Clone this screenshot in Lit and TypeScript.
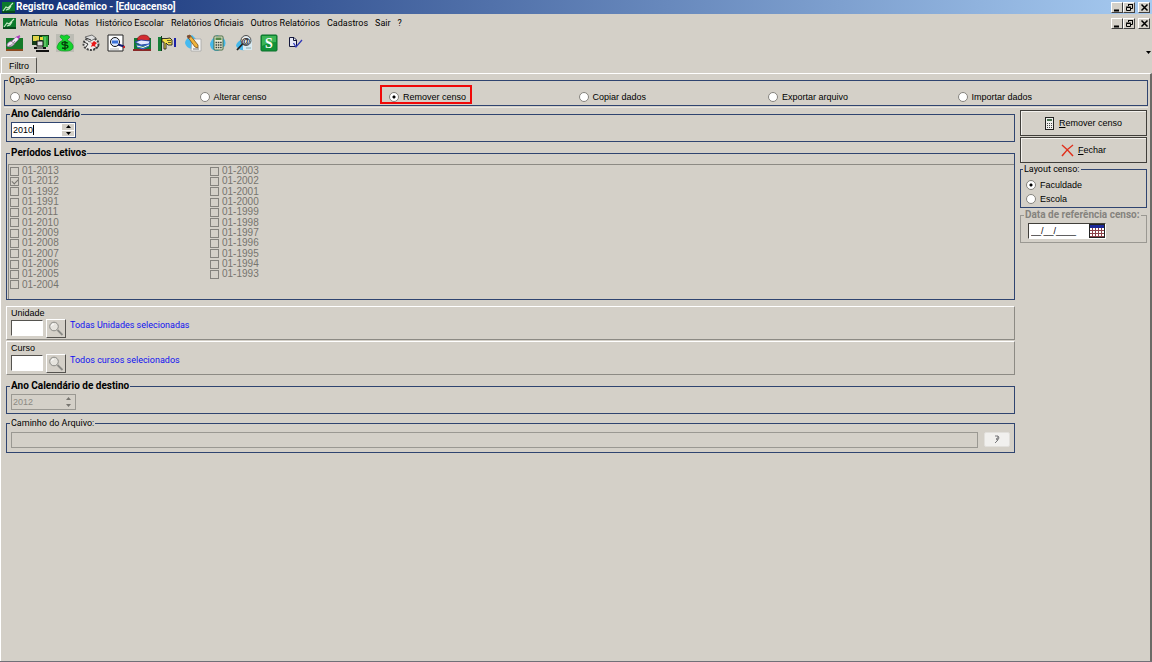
import { LitElement, html, css, svg } from "lit";
import { customElement, property, state } from "lit/decorators.js";

const leaf = svg`<rect x="0" y="0" width="13" height="11" fill="#0c7a2c"/><rect x="0" y="9" width="13" height="2" fill="#064a1c"/><path d="M1 9L4 5L6 6L11 1M4 8L7 7L9 4" stroke="#c8ecc8" stroke-width="1.1" fill="none"/>`;

const magnifier = svg`<circle cx="6" cy="5.500" r="4.300" fill="#e6e4de" stroke="#8a8a86"/><path d="M9.500 9L14.500 14" stroke="#8a8a86" stroke-width="1.800"/><path d="M3.500 5Q4 3 6 3" stroke="#fff" fill="none"/>`;

const toolIcons: { name: string; art: unknown }[] = [
  { name: "Matrícula", art: svg`<path d="M1 4H18V15H1Z" fill="#157a28"/><path d="M1 15H18V17H1Z" fill="#8a4a20"/><path d="M2 12Q2 8 7 7L11 3L15 2L13 6L10 9Q7 14 2 12Z" fill="#f3e6f5" stroke="#a06ab0" stroke-width=".7"/><path d="M4 12Q7 12 10 7M6 7L10 10" stroke="#777" stroke-width=".8" fill="none"/><path d="M11 3L15 1L14 5Z" fill="#b13ac0"/>` },
  { name: "Turmas", art: svg`<rect x="1" y="1" width="17" height="10" fill="#143c18"/><rect x="2" y="2" width="6" height="5" fill="#e0d44a"/><rect x="11" y="2" width="6" height="11" fill="#2aa43a"/><path d="M14 3V15" stroke="#8be08b"/><rect x="6" y="7" width="6" height="5" fill="#dcdcdc" stroke="#111"/><path d="M3 14H15M5 17H18" stroke="#111" stroke-width="2"/><path d="M6 14H12" stroke="#e8e8e8"/><rect x="9" y="3" width="3" height="3" fill="#e8d83a"/>` },
  { name: "Financeiro", art: svg`<rect width="18" height="18" fill="#bcbcb4"/><path d="M5 1L8 2L11 1L14 3L11 6Q18 9 17 14Q16 17 9 17Q1 17 1 13Q2 8 7 6L4 3Z" fill="#14d42c" stroke="#0a9a20" stroke-width=".7"/><path d="M12 9Q6 7 6 9.500Q6 11 9 11Q12 11 12 13Q11 15 6 14M9 7V16" stroke="#073c0d" stroke-width="1.300" fill="none"/>` },
  { name: "Transferência", art: svg`<ellipse cx="9" cy="10" rx="7.500" ry="6" fill="#ececea" stroke="#444" stroke-width="2" stroke-dasharray="2 1.200"/><path d="M3 3L10 1L14 4L7 8Z" fill="#dedede" stroke="#555" stroke-width=".8"/><path d="M2 8L6 10L4 13M12 15L17 12M4 4L9 6" stroke="#333" fill="none"/><path d="M8 8L10 9L12 7L15 9L13 11L14 13L11 12L9 13L10 10Z" fill="#e81818"/>` },
  { name: "Consultar", art: svg`<path d="M1 1H16V17H1Z" fill="#fff" stroke="#222"/><path d="M3 15H12" stroke="#b0b0b0"/><circle cx="8" cy="8" r="4.500" fill="#dfeaff" stroke="#111"/><rect x="5" y="6.500" width="6" height="3" fill="#3a70d8"/><path d="M11 10.500L17 12.500" stroke="#101c70" stroke-width="2"/><circle cx="17" cy="13" r="1.200" fill="#c02020"/>` },
  { name: "Biblioteca", art: svg`<rect x="1" y="4" width="17" height="11" fill="#147a34"/><rect x="0" y="15" width="18" height="2" fill="#8a2828"/><path d="M4 6Q5 1 11 1Q16 1 17 6L11 7Z" fill="#d42c30" stroke="#6a1616" stroke-width=".6"/><path d="M2 8L8 6L17 7L16 10L8 11Z" fill="#e4e8ff" stroke="#1c38a8" stroke-width=".8"/><path d="M3 11L10 12L17 10M4 13L10 15L16 12" stroke="#3c62e0" fill="none"/><path d="M4 12L10 13.500L16 11" stroke="#fff" fill="none"/>` },
  { name: "Encaminhar", art: svg`<rect x="0" y="3" width="3" height="14" fill="#178038"/><path d="M3.500 2V17" stroke="#0c3c18"/><path d="M4 4.500H9L12 4L14 6V11H10L8 9V15H6V8H4Z" fill="#f2e04c" stroke="#222" stroke-width=".9"/><path d="M9 6.500H13M10 8.500H13" stroke="#222" stroke-width=".7"/><rect x="16" y="4" width="2" height="9" fill="#1c22a8"/>` },
  { name: "Editar", art: svg`<path d="M8 1Q1 5 1 9Q2 14 8 15Q15 14 15 8Z" fill="#46baf0"/><path d="M8 5H17V17H7Z" fill="#f6f6f4" stroke="#a6a6a6" stroke-width=".8"/><path d="M3 2L6 1L14 11L14 14L11 13Z" fill="#f0b43c" stroke="#76501c" stroke-width=".8"/><path d="M3 2L6 1L7 3L4 5Z" fill="#7a4a38"/><path d="M9 15H15" stroke="#777"/>` },
  { name: "Calcular", art: svg`<path d="M8 1Q1 6 1 11Q2 17 9 17L16 12Q18 5 12 3Z" fill="#46b8ea"/><rect x="5" y="2" width="9" height="14" rx="1" fill="#e8e8d4" stroke="#466a42"/><rect x="6.500" y="3.500" width="6" height="2.500" fill="#568a48"/><path d="M6.500 8.500H13M6.500 11H13M6.500 13.500H13" stroke="#36433c" stroke-width="1.500" stroke-dasharray="1.600 .7"/>` },
  { name: "Pesquisar", art: svg`<path d="M9 4Q1 8 1 12Q4 17 10 16Z" fill="#46b8ea"/><path d="M8 5H17V16H8Z" fill="#d8ebf2"/><path d="M11 14H16" stroke="#8aa" /><circle cx="11" cy="6.500" r="5" fill="#e6eef2" stroke="#4a4a4a"/><text x="11" y="9.500" text-anchor="middle" font-family="Liberation Sans" font-weight="bold" font-size="9">@</text><path d="M7.500 10L2 16" stroke="#222" stroke-width="1.800"/>` },
  { name: "Situação", art: svg`<rect x="1" y="1" width="16" height="16" rx="1" fill="#139238" stroke="#08702a"/><path d="M2 2H16V8Q9 8 2 12Z" fill="#3cb456"/><text x="9" y="14" text-anchor="middle" font-family="Liberation Serif" font-weight="bold" font-size="14" fill="#fff">S</text>` },
  { name: "Confirmar", art: svg`<path d="M3.500 3.500H8L10.500 6V12.500H3.500Z" fill="#e6e8f4" stroke="#14183c"/><path d="M7.500 4V6.500H10" stroke="#14183c" fill="none"/><path d="M7.500 9L10 13L16 6" stroke="#3038b8" stroke-width="1.300" fill="none"/>` },
];

/** Classic minimise / restore / close trio. */
@customElement("window-controls")
class WindowControls extends LitElement {
  static styles = css`
    :host { display: flex; }
    button { width: 12px; height: 11px; padding: 0; display: grid; place-items: center; background: #d4d0c8; border: 1px solid; border-color: #fff #404040 #404040 #fff; }
    .close { margin-left: 3px; }
    svg { display: block; }
  `;
  render() {
    return html`
      <button aria-label="Minimizar"><svg width="9" height="9"><path d="M1 7.500H6" stroke="#000" stroke-width="2"/></svg></button>
      <button aria-label="Restaurar"><svg width="9" height="9"><path d="M3.500 3V1.500H7.500V5.500H6M3 1.500H8M1.500 4.500H5.500V7.500H1.500ZM1 4H6" stroke="#000" fill="none"/></svg></button>
      <button class="close" aria-label="Fechar janela"><svg width="9" height="9"><path d="M1.500 1.500L7.500 7.500M7.500 1.500L1.500 7.500" stroke="#000" stroke-width="1.500"/></svg></button>`;
  }
}

/** Year field with up and down arrows. */
@customElement("year-spinner")
class YearSpinner extends LitElement {
  @property() label = "";
  @property({ type: Number }) value = 2010;
  @property({ type: Boolean }) disabled = false;
  @property({ type: Boolean }) caret = false;
  static styles = css`
    :host { display: block; }
    .box { position: relative; display: flex; box-sizing: border-box; width: 65px; height: 16px; border: 1px solid #2f4470; background: #fff; }
    .box.off { border-color: #9a9892; background: #d4d0c8; }
    input { flex: 1; min-width: 0; border: 0; margin: 0; padding: 0 1px; background: none; color: #000; font: 9px "Liberation Sans", Arial, sans-serif; appearance: textfield; outline: 0; }
    input::-webkit-inner-spin-button { appearance: none; }
    .off input { color: #8c8a84; }
    .arrows { display: flex; flex-direction: column; width: 12px; padding: 1px; gap: 1px; }
    button { flex: 1; border: 0; padding: 0; display: grid; place-items: center; background: #d4d0c8; }
    svg { display: block; }
    .caret { position: absolute; left: 21px; top: 2px; width: 1px; height: 10px; background: #000; }
  `;
  private step(by: number) { this.value += by; }
  render() {
    const ink = this.disabled ? "#77756f" : "#000";
    return html`<div class="box ${this.disabled ? "off" : ""}">
      <input type="number" aria-label=${this.label} .value=${String(this.value)} ?disabled=${this.disabled}>
      ${this.caret ? html`<span class="caret"></span>` : ""}
      <div class="arrows">
        <button aria-label="Aumentar" ?disabled=${this.disabled} @click=${() => this.step(1)}><svg width="5" height="3"><path d="M0 3L2.500 0L5 3Z" fill=${ink}/></svg></button>
        <button aria-label="Diminuir" ?disabled=${this.disabled} @click=${() => this.step(-1)}><svg width="5" height="3"><path d="M0 0L2.500 3L5 0Z" fill=${ink}/></svg></button>
      </div>
    </div>`;
  }
}

@customElement("app-root")
class AppRoot extends LitElement {
  @state() private option = "Remover censo";
  @state() private layout = "Faculdade";

  private menus = ["Matrícula", "Notas", "Histórico Escolar", "Relatórios Oficiais", "Outros Relatórios", "Cadastros", "Sair", "?"];
  private options = ["Novo censo", "Alterar censo", "Remover censo", "Copiar dados", "Exportar arquivo", "Importar dados"];
  private terms = ["2013", "2012", "1992", "1991", "2011", "2010", "2009", "2008", "2007", "2006", "2005", "2004", "2003", "2002", "2001", "2000", "1999", "1998", "1997", "1996", "1995", "1994", "1993"];

  static styles = css`
    :host { display: flex; flex-direction: column; min-height: 100vh; box-sizing: border-box; background: #d4d0c8; border-bottom: 1px solid #707078; color: #000; font: 9px/12px "Liberation Sans", Arial, sans-serif; }
    * { box-sizing: border-box; }
    svg { display: block; flex: none; }
    button { font: inherit; color: inherit; padding: 0; }
    .title { display: flex; align-items: center; height: 14px; padding: 0 2px; gap: 1px; background: linear-gradient(90deg, #122f76, #a6caf0); color: #fff; }
    .title h1 { flex: 1; margin: 0; font: bold 10px/14px Roboto, Tahoma, sans-serif; }
    .menu { display: flex; align-items: center; height: 16px; margin-top: 1px; padding: 0 2px 0 3px; font-family: Roboto, Tahoma, sans-serif; }
    .menu nav { flex: 1; display: flex; gap: 7px; padding-left: 4px; }
    .menu a { color: inherit; text-decoration: none; }
    .tools { display: flex; align-items: center; justify-content: space-between; height: 26px; padding: 0 1px 2px 5px; }
    .set { width: 299px; display: flex; justify-content: space-between; }
    .tool { width: 18px; height: 18px; background: none; border: 0; }
    .more { align-self: flex-end; background: none; border: 0; }
    .tab { width: 36px; height: 16px; background: none; border: 0; border-top: 1px solid #fff; border-left: 1px solid #fff; border-right: 1px solid #55534f; margin-left: 1px; border-radius: 2px 2px 0 0; }
    .page { flex: 1; display: flex; flex-direction: column; border-top: 1px solid #fff; border-left: 1px solid #fff; border-right: 2px solid #6c6a66; padding: 0 2px 0 3px; }
    fieldset { margin: 0; min-width: 0; border: 1px solid #2f4470; padding: 0 4px; }
    legend { padding: 0 1px; margin-left: -1px; line-height: 12px; font-family: Roboto, Tahoma, sans-serif; }
    .strong > legend { font-weight: bold; font-size: 10px; }
    .choices { padding: 0; }
    .choices > legend { margin-left: 3px; }
    .options { display: grid; grid-template-columns: repeat(6, 1fr); justify-items: start; padding: 5px 0 2px 5px; }
    .radio { position: relative; display: flex; align-items: center; gap: 4px; }
    .marked::after { content: ""; position: absolute; inset: -6px -6px -1px -9px; border: 2px solid #f00808; pointer-events: none; }
    input[type="radio"] { appearance: none; width: 10px; height: 10px; margin: 0; border: 1px solid #85837e; border-radius: 50%; background: #fff; }
    input[type="radio"]:checked { background: radial-gradient(circle, #000 0 1px, #fff 2px); }
    .body { display: flex; align-items: flex-start; gap: 5px; padding: 0 1px 0 2px; border-top: 1px solid #e8e6e0; margin-top: 1px; }
    .main { flex: 1; min-width: 0; display: flex; flex-direction: column; }
    .side { width: 127px; display: flex; flex-direction: column; padding: 2px 0; }
    .year { padding: 2px 4px 3px; }
    .periods { margin-top: 5px; padding: 5px 0 0 1px; }
    .periods > legend { margin-left: 2px; }
    .list { display: grid; grid-template-rows: repeat(12, 1fr); grid-auto-columns: 200px; grid-auto-flow: column; height: 135px; padding: 1px 0 9px 1px; border-top: 1px solid #8c8a84; border-left: 1px solid #8c8a84; }
    .check { display: flex; align-items: center; gap: 3px; color: #77756f; font-size: 10px; line-height: 10px; }
    input[type="checkbox"] { appearance: none; display: grid; width: 9px; height: 9px; margin: 0; border: 1px solid #85837e; }
    input[type="checkbox"]:checked::after { content: ""; width: 5px; height: 3px; margin: 1px; border: solid #77756f; border-width: 0 0 1px 1px; transform: rotate(-45deg); }
    .pick { display: grid; grid-template-columns: 32px 20px 1fr; column-gap: 3px; height: 34px; padding: 1px 4px; border: 1px solid; border-color: #fff #8c8a84 #8c8a84 #fff; }
    .pick.first { margin-top: 6px; }
    .pick + .pick { margin-top: 1px; }
    .pick label { grid-column: 1 / -1; line-height: 11px; height: 11px; }
    .pick input { height: 16px; width: 32px; border: 1px solid; border-color: #55534f #fff #fff #55534f; background: #fff; padding: 0 2px; margin-top: 1px; }
    .pick button { width: 20px; height: 19px; display: grid; place-items: center; background: #d4d0c8; border: 1px solid; border-color: #fff #55534f #55534f #fff; }
    .pick output { color: #1010f0; font-family: Roboto, Tahoma, sans-serif; padding-left: 1px; line-height: 12px; }
    .target { margin-top: 5px; }
    .path { margin-top: 3px; padding: 3px 4px 4px; }
    .row { display: flex; gap: 6px; }
    .row input { flex: 1; min-width: 0; height: 16px; background: #d4d0c8; border: 1px solid #9a9892; padding: 0 2px; }
    .row button { width: 26px; height: 15px; display: grid; place-items: center; background: #f1f0ee; border: 1px solid #e2e0dc; border-radius: 2px; }
    .action { display: flex; align-items: center; justify-content: center; gap: 4px; height: 26px; background: #d4d0c8; border: 1px solid #403e3a; box-shadow: inset 1px 1px #f4f2ee; }
    .action + .action { margin-top: 1px; }
    .kind { padding: 3px 5px 1px; }
    .kind > legend { margin-left: -3px; }
    .kind .radio { height: 14px; }
    .date { border-color: #9a9892; color: #85837e; padding: 2px 7px 3px; margin-top: 1px; }
    .date > legend { white-space: nowrap; margin-left: -4px; }
    .when { display: flex; width: 78px; height: 16px; background: #fff; border: 1px solid; border-color: #403e3a #fff #fff #403e3a; }
    .when input { flex: 1; min-width: 0; border: 0; padding: 0 2px; font: inherit; background: none; color: #000; }
    .when button { border: 0; background: none; }
  `;

  private radio(group: string, text: string, current: string, pick: (v: string) => void, marked = false) {
    return html`<label class="radio ${marked ? "marked" : ""}"><input type="radio" name=${group} .checked=${text === current} @change=${() => pick(text)}>${text}</label>`;
  }

  private picker(id: string, text: string, status: string, first: boolean) {
    return html`<div class="pick ${first ? "first" : ""}">
      <label for=${id}>${text}</label>
      <input id=${id} type="text">
      <button aria-label="Pesquisar ${text}"><svg width="16" height="15">${magnifier}</svg></button>
      <output for=${id}>${status}</output>
    </div>`;
  }

  render() {
    return html`
      <header class="title"><svg width="13" height="11">${leaf}</svg><h1>Registro Acadêmico - [Educacenso]</h1><window-controls></window-controls></header>
      <div class="menu"><svg width="13" height="11">${leaf}</svg><nav>${this.menus.map((m) => html`<a href="#">${m}</a>`)}</nav><window-controls></window-controls></div>
      <div class="tools"><div class="set">${toolIcons.map((t) => html`<button class="tool" aria-label=${t.name}><svg width="18" height="18">${t.art}</svg></button>`)}</div>
        <button class="more" aria-label="Mais"><svg width="5" height="5"><path d="M0 1H5L2.500 4Z"/></svg></button></div>
      <button class="tab">Filtro</button>
      <main class="page">
        <fieldset class="choices"><legend>Opção</legend><div class="options">
          ${this.options.map((o) => this.radio("option", o, this.option, (v) => (this.option = v), o === "Remover censo"))}
        </div></fieldset>
        <div class="body">
          <div class="main">
            <fieldset class="strong year"><legend>Ano Calendário</legend><year-spinner label="Ano Calendário" .value=${2010} caret></year-spinner></fieldset>
            <fieldset class="strong periods"><legend>Períodos Letivos</legend><div class="list">
              ${this.terms.map((t) => html`<label class="check"><input type="checkbox" disabled .checked=${t === "2012"}>01-${t}</label>`)}
            </div></fieldset>
            ${this.picker("unit", "Unidade", "Todas Unidades selecionadas", true)}
            ${this.picker("course", "Curso", "Todos cursos selecionados", false)}
            <fieldset class="strong year target"><legend>Ano Calendário de destino</legend><year-spinner label="Ano Calendário de destino" .value=${2012} disabled></year-spinner></fieldset>
            <fieldset class="path"><legend>Caminho do Arquivo:</legend><div class="row">
              <input type="text" aria-label="Caminho do Arquivo" disabled>
              <button aria-label="Procurar arquivo"><svg width="8" height="9"><path d="M2 1H5V3L3 4L5 5L2 8M5 1L6 3L4 6" stroke="#77777a" fill="none"/></svg></button>
            </div></fieldset>
          </div>
          <aside class="side">
            <button class="action"><svg width="10" height="13"><rect x=".5" y=".5" width="8" height="12" fill="#f0f0ee" stroke="#222"/><rect x="2" y="2" width="5" height="2" fill="#4a7050"/><path d="M2 6.500H7M2 8.500H7M2 10.500H7" stroke="#444" stroke-dasharray="1 1"/></svg><span><u>R</u>emover censo</span></button>
            <button class="action"><svg width="13" height="13"><path d="M1 1Q6 5 12 12M12 1Q6 5 1 12" stroke="#e0301c" stroke-width="1.500" fill="none"/></svg><span><u>F</u>echar</span></button>
            <fieldset class="kind"><legend>Layout censo:</legend>
              ${["Faculdade", "Escola"].map((k) => this.radio("layout", k, this.layout, (v) => (this.layout = v)))}
            </fieldset>
            <fieldset class="strong date"><legend>Data de referência censo:</legend><div class="when">
              <input type="text" aria-label="Data de referência censo" value="__/__/____">
              <button aria-label="Abrir calendário"><svg width="16" height="14"><rect x=".5" y=".5" width="15" height="13" fill="#fff" stroke="#222"/><rect x="1" y="1" width="14" height="3" fill="#1c2898"/><path d="M1 6.500H15M1 9.500H15M1 12.500H15M3.500 4V13M6.500 4V13M9.500 4V13M12.500 4V13" stroke="#8c4048"/></svg></button>
            </div></fieldset>
          </aside>
        </div>
      </main>`;
  }
}
